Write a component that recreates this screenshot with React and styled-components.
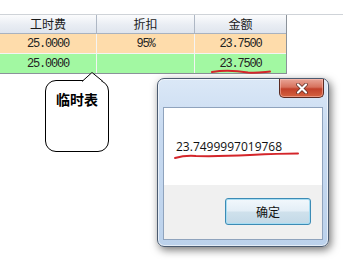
import React from "react";
import styled, { createGlobalStyle } from "styled-components";

const Global = createGlobalStyle`
  html, body { margin: 0; padding: 0; background: #ffffff; }
  body { font-family: "Noto Sans CJK SC", "Liberation Sans", sans-serif; }
`;

const Page = styled.div`
  position: relative;
  width: 343px;
  height: 263px;
  overflow: hidden;
  background: #ffffff;
  padding-top: 14px;
  box-sizing: border-box;
`;

const GridFrame = styled.div`
  border-top: 1px solid #cfd3d8;
`;

const Table = styled.div`
  display: grid;
  grid-template-columns: 97px 98px 91px;
  width: 287px;
  border-right: 1px solid #8b929a;
  border-bottom: 1px solid #8b929a;
  box-sizing: border-box;
`;

const HeadCell = styled.div`
  height: 18px;
  display: flex;
  align-items: center;
  justify-content: center;
  font-size: 12px;
  color: #1a1a1a;
  background: linear-gradient(#fbfcfd, #e9edf3 55%, #dfe5ee);
  border-bottom: 1px solid #a9b2bf;
  border-right: ${(p) => (p.$last ? "none" : "1px solid #aeb7c4")};
  line-height: 1;
`;

const Cell = styled.div`
  height: 19px;
  display: flex;
  align-items: center;
  justify-content: center;
  font-family: "Liberation Mono", monospace;
  font-size: 12px;
  letter-spacing: -1.2px;
  color: #222;
  background: ${(p) => p.$bg};
  border-bottom: ${(p) => (p.$lastRow ? "none" : "1px solid #f4f4f4")};
  border-right: ${(p) => (p.$last ? "none" : "1px solid #f4f4f4")};
`;

const Callout = styled.div`
  position: absolute;
  left: 45px;
  top: 80px;
  width: 64px;
  height: 72px;
  border: 1px solid #000;
  border-radius: 11px;
  background: #fff;
  box-sizing: border-box;
  padding: 11px 0 0 10px;
  font-size: 14px;
  font-weight: bold;
  color: #000;
  line-height: 1;
`;

const Pointer = styled.svg`
  position: absolute;
  left: 80px;
  top: 71px;
`;

const Window = styled.div`
  position: absolute;
  left: 157px;
  top: 78px;
  width: 172px;
  height: 169px;
  box-sizing: border-box;
  border: 1px solid #4b5b70;
  border-radius: 7px;
  background: linear-gradient(#dbe8f7, #c9dbf1 30%, #bcd2ec);
  box-shadow: 2px 3px 8px rgba(0, 0, 0, 0.55), inset 0 0 0 1px rgba(255,255,255,0.6);
  display: flex;
  flex-direction: column;
  padding: 0 5px 6px 5px;
`;

const TitleBar = styled.div`
  height: 28px;
  display: flex;
  justify-content: flex-end;
  align-items: flex-start;
`;

const CloseBtn = styled.div`
  width: 45px;
  height: 19px;
  margin-right: -1px;
  box-sizing: border-box;
  border: 1px solid #5a2a22;
  border-top: none;
  border-radius: 0 0 5px 5px;
  background: linear-gradient(#e9a597, #d7725d 45%, #c2412a 55%, #d4623f);
  display: flex;
  align-items: center;
  justify-content: center;
  box-shadow: inset 0 0 0 1px rgba(255, 200, 190, 0.5);
`;

const Content = styled.div`
  flex: 1;
  border: 1px solid #8fa3bd;
  display: flex;
  flex-direction: column;
  background: #f0f0f0;
`;

const MessageArea = styled.div`
  height: 77px;
  background: #ffffff;
  box-sizing: border-box;
  padding: 33px 0 0 12px;
  font-family: "Open Sans", "Noto Sans", sans-serif;
  font-size: 12px;
  color: #111;
  line-height: 1;
`;

const Footer = styled.div`
  flex: 1;
  display: flex;
  justify-content: flex-end;
  align-items: flex-start;
  padding: 13px 11px 0 0;
`;

const Button = styled.div`
  width: 86px;
  height: 27px;
  box-sizing: border-box;
  border: 1px solid #3c8bb5;
  border-radius: 3px;
  background: linear-gradient(#f2f8fc, #e3eef6 48%, #cfe1ec 52%, #c3d9e7);
  box-shadow: inset 0 0 0 1px #a7ddf3;
  display: flex;
  align-items: center;
  justify-content: center;
  font-size: 12px;
  color: #111;
`;

const Ink = styled.svg`
  position: absolute;
  left: 0;
  top: 0;
  pointer-events: none;
`;

const headers = ["工时费", "折扣", "金额"];
const rows = [
  { bg: "#fedcab", cells: ["25.0000", "95%", "23.7500"] },
  { bg: "#a2f8a2", cells: ["25.0000", "", "23.7500"] },
];

export default function App() {
  return (
    <Page>
      <Global />
      <GridFrame>
        <Table>
          {headers.map((h, i) => (
            <HeadCell key={h} $last={i === 2}>{h}</HeadCell>
          ))}
          {rows.map((r, ri) =>
            r.cells.map((c, ci) => (
              <Cell key={ri + "-" + ci} $bg={r.bg} $last={ci === 2} $lastRow={ri === 1}>
                {c}
              </Cell>
            ))
          )}
        </Table>
      </GridFrame>

      <Callout>临时表</Callout>
      <Pointer width="30" height="12" viewBox="0 0 30 12">
        <path d="M2 10.5 L12 1.5 L23 10.5" fill="#fff" stroke="#000" strokeWidth="1" />
        <rect x="5" y="10" width="16" height="2" fill="#fff" />
      </Pointer>

      <Window>
        <TitleBar>
          <CloseBtn>
            <svg width="14" height="11" viewBox="0 0 14 11">
              <path d="M3 1.5 L11 9.5 M11 1.5 L3 9.5" stroke="#5a2a22" strokeWidth="3.6" strokeLinecap="round" />
              <path d="M3 1.5 L11 9.5 M11 1.5 L3 9.5" stroke="#ffffff" strokeWidth="2.2" strokeLinecap="round" />
            </svg>
          </CloseBtn>
        </TitleBar>
        <Content>
          <MessageArea>23.7499997019768</MessageArea>
          <Footer>
            <Button>确定</Button>
          </Footer>
        </Content>
      </Window>

      <Ink width="343" height="263" viewBox="0 0 343 263">
        <path d="M212 72 C225 70, 238 71, 248 72.5 C256 73.5, 264 72, 270 71.5" fill="none" stroke="#d4252a" strokeWidth="2" strokeLinecap="round" />
        <path d="M175 158 C182 156, 190 155.5, 196 156 C215 156.5, 230 156, 250 155 C270 154, 286 153.5, 298 153.5" fill="none" stroke="#d4252a" strokeWidth="2" strokeLinecap="round" />
      </Ink>
    </Page>
  );
}
